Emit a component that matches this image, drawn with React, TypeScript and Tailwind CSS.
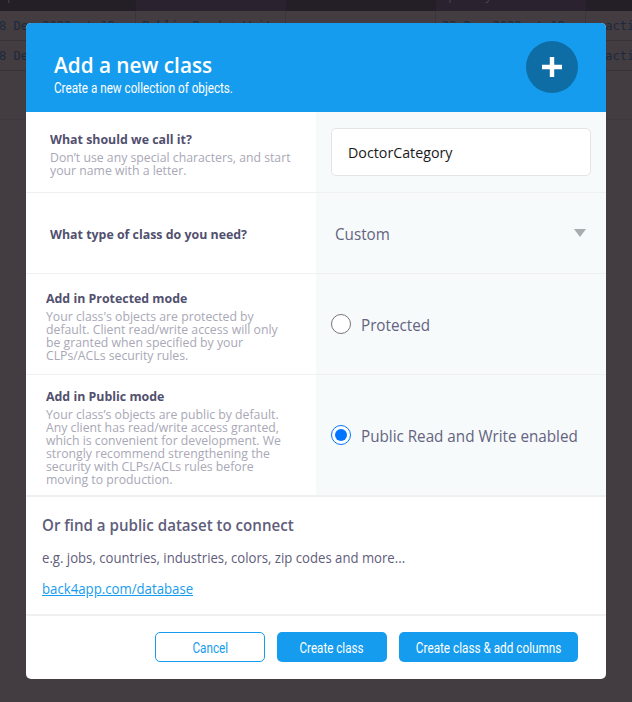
import React from "react";

function Cell({ className, children }: { className: string; children?: React.ReactNode }) {
  return <div className={`h-full shrink-0 overflow-hidden border-r border-[#3b3539] pt-[8px] whitespace-pre ${className}`}>{children}</div>;
}

function BackRow({ cells }: { cells: string[] }) {
  return (
    <div className="flex h-[30px] border-b border-[#393338] font-['DejaVu_Sans_Mono','Liberation_Mono',monospace] text-[12px] leading-[15px] text-[#1b2a3e]">
      <Cell className="w-[136px]"><span className="-ml-[1px]">{cells[0]}</span></Cell>
      <Cell className="w-[150px] pl-[6px]">{cells[1]}</Cell>
      <Cell className="w-[150px]" />
      <Cell className="w-[150px] pl-[6px]">{cells[2]}</Cell>
      <Cell className="w-[46px] border-r-0 pl-[12px]">{cells[3]}</Cell>
    </div>
  );
}

/* One line of text, slightly condensed from its left edge. */
function Line({ children }: { children: React.ReactNode }) {
  return <span className="block w-fit origin-left scale-x-[0.943] whitespace-nowrap">{children}</span>;
}

type RowProps = {
  className: string;
  title: string;
  lines?: string[];
  children: React.ReactNode;
};

function Row({ className, title, lines, children }: RowProps) {
  return (
    <div className={`flex border-[#f0f0f2] ${className}`}>
      <div className="flex w-[290px] flex-col justify-center bg-white pt-[2px]">
        <div className="text-[13px] leading-[18px] font-bold text-[#52506f]">
          <span className="block w-fit origin-left scale-x-[0.952] whitespace-nowrap">{title}</span>
        </div>
        {lines && (
          <div className="mt-[3px] text-[13px] leading-[13px] text-[#a9a8b6]">
            {lines.map((l) => <Line key={l}>{l}</Line>)}
          </div>
        )}
      </div>
      <div className="flex w-[290px] items-center bg-[#f6fafb]">{children}</div>
    </div>
  );
}

function Label({ children }: { children: React.ReactNode }) {
  return <span className="mt-[2px] block w-fit origin-left scale-x-[0.951] text-[16px] leading-[22px] whitespace-nowrap text-[#65637f]">{children}</span>;
}

export default function App() {
  return (
    <div className="relative h-[702px] w-[632px] overflow-hidden bg-[#433c40] font-['Open_Sans','Noto_Sans',sans-serif]">
      <div className="flex h-[11px] overflow-hidden bg-[#241f26] text-[12px] leading-[12px] text-[#4d474e]">
        <div className="w-[136px]"><div className="-mt-[10px]">updatedAt</div></div>
        <div className="w-[150px] bg-[#2a222e]" />
        <div className="w-[150px]" />
        <div className="w-[150px] bg-[#2a222e] pl-[6px]"><div className="-mt-[10px]">Specialty</div></div>
      </div>
      <BackRow cells={["8 Dec 2022 at 18", "Public Read + Write", "23 Dec 2022 at 18", " acti"]} />
      <BackRow cells={["8 Dec", "", "", " acti"]} />
      <div className="h-[49px] border-b border-[#3e373c]" />

      <div className="absolute top-[22.5px] left-[26px] w-[580px] overflow-hidden rounded-[5px] bg-white">
        <div className="flex h-[89.5px] items-start justify-between bg-[#169cee] px-[28px]">
          <div className="text-white">
            <h1 className="mt-[27px] text-[22px] leading-[28px] font-semibold"><Line>Add a new class</Line></h1>
            <p className="mt-[2px] w-fit origin-left scale-x-[0.835] font-['Roboto',sans-serif] text-[14px] leading-[17px] whitespace-nowrap">Create a new collection of objects.</p>
          </div>
          <div className="mt-[18.5px] flex size-[52px] items-center justify-center rounded-full bg-[#0f6da6]">
            <svg width="20" height="20" viewBox="0 0 20 20"><path d="M10 0v20M0 10h20" stroke="#fff" strokeWidth="4.4" /></svg>
          </div>
        </div>

        <Row className="h-[81px] border-b pl-[24px] [&>div:first-child]:w-[266px]" title="What should we call it?" lines={["Don’t use any special characters, and start", "your name with a letter."]}>
          <div className="ml-[15px] flex h-[48px] w-[260px] items-center rounded-[5px] border border-[#e3e4e6] bg-white pl-[16px] text-[15px] text-[#1a1a1a]">
            <span className="origin-left scale-x-[0.95]">DoctorCategory</span>
          </div>
        </Row>
        <Row className="h-[81px] border-b pl-[24px] [&>div:first-child]:w-[266px]" title="What type of class do you need?">
          <div className="flex w-full items-center justify-between pr-[20px] pl-[19px]">
            <Label>Custom</Label>
            <svg width="12" height="8" viewBox="0 0 12 8"><path d="M0 0h12L6 8z" fill="#a8acae" /></svg>
          </div>
        </Row>
        <Row className="h-[101px] border-b pl-[20px] [&>div:first-child]:w-[270px]" title="Add in Protected mode" lines={["Your class's objects are protected by", "default. Client read/write access will only", "be granted when specified by your", "CLPs/ACLs security rules."]}>
          <div className="ml-[15px] flex items-center gap-[10px]">
            <span className="size-[20px] rounded-full border border-[#767676] bg-white" />
            <Label>Protected</Label>
          </div>
        </Row>
        <Row className="h-[122px] border-b-2 pl-[20px] [&>div:first-child]:w-[270px]" title="Add in Public mode" lines={["Your class’s objects are public by default.", "Any client has read/write access granted,", "which is convenient for development. We", "strongly recommend strengthening the", "security with CLPs/ACLs rules before", "moving to production."]}>
          <div className="ml-[15px] flex items-center gap-[10px]">
            <span className="flex size-[20px] items-center justify-center rounded-full border border-[#0075ff] bg-white">
              <span className="size-[12px] rounded-full bg-[#0075ff]" />
            </span>
            <Label>Public Read and Write enabled</Label>
          </div>
        </Row>

        <div className="h-[119px] border-b-2 border-[#f0f0f1] pl-[16px] text-[#5f5d7b]">
          <h2 className="pt-[17px] text-[16px] leading-[22px] font-semibold"><Line>Or find a public dataset to connect</Line></h2>
          <p className="mt-[12px] text-[14px] leading-[20px]"><span className="block w-fit origin-left scale-x-[0.939] whitespace-nowrap">e.g. jobs, countries, industries, colors, zip codes and more...</span></p>
          <a className="mt-[11px] block text-[14px] leading-[20px] text-[#169cee]"><Line><span className="underline">back4app.com/database</span></Line></a>
        </div>
        <div className="flex h-[63px] justify-end gap-[12px] pt-[16px] pr-[28px] font-['Roboto',sans-serif] text-[14px] leading-[18px] text-white">
          <button className="flex h-[30px] w-[110px] items-center justify-center rounded-[5px] border border-[#169cee] pt-[2px] text-[#169cee]"><span className="scale-x-[0.84]">Cancel</span></button>
          <button className="flex h-[30px] w-[110px] items-center justify-center rounded-[5px] bg-[#169cee] pt-[2px]"><span className="scale-x-[0.83] whitespace-nowrap">Create class</span></button>
          <button className="flex h-[30px] w-[179px] items-center justify-center rounded-[5px] bg-[#169cee] pt-[2px]"><span className="scale-x-[0.84] whitespace-nowrap">Create class &amp; add columns</span></button>
        </div>
      </div>
    </div>
  );
}
